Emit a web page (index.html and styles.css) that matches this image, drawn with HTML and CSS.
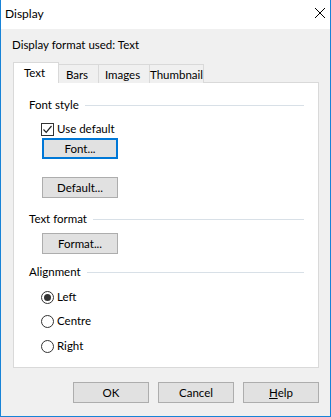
FILE: index.html
```html
<!DOCTYPE html>
<html lang="en">
<head>
    <meta charset="UTF-8">
    <title>Display</title>
    <link rel="stylesheet" href="styles.css">
</head>
<body>
    <div class="window">
        <div class="title-bar">
            <span class="title">Display</span>
            <svg class="close" width="12" height="12" viewBox="0 0 12 12">
                <path d="M1 1 L11 11 M11 1 L1 11" stroke="#000" stroke-width="1" fill="none"/>
            </svg>
        </div>

        <div class="client">
            <div class="used">Display format used: Text</div>

            <div class="tabs">
                <div class="tab active tab-text">Text</div>
                <div class="tab tab-bars">Bars</div>
                <div class="tab tab-images">Images</div>
                <div class="tab tab-thumb">Thumbnail</div>
            </div>

            <div class="panel">
                <div class="group group-font">
                    <span>Font style</span><span class="rule"></span>
                </div>
                <label class="check-row">
                    <span class="checkbox">
                        <svg width="11" height="11" viewBox="0 0 11 11">
                            <path d="M1.5 5.5 L4.2 8.3 L9.5 2" stroke="#222" stroke-width="1.2" fill="none"/>
                        </svg>
                    </span>
                    Use default
                </label>
                <button class="btn focused btn-font">Font...</button>
                <button class="btn btn-default">Default...</button>

                <div class="group group-text">
                    <span>Text format</span><span class="rule"></span>
                </div>
                <button class="btn btn-format">Format...</button>

                <div class="group group-align">
                    <span>Alignment</span><span class="rule"></span>
                </div>
                <label class="radio-row first"><span class="radio checked"></span>Left</label>
                <label class="radio-row second"><span class="radio"></span>Centre</label>
                <label class="radio-row third"><span class="radio"></span>Right</label>
            </div>

            <div class="actions">
                <button class="btn">OK</button>
                <button class="btn">Cancel</button>
                <button class="btn"><u>H</u>elp</button>
            </div>
        </div>
    </div>
</body>
</html>
```

FILE: styles.css
```css
* {
    margin: 0;
    padding: 0;
    box-sizing: border-box;
}

body {
    font-family: Lato, "Noto Sans", sans-serif;
    font-size: 11.5px;
    color: #000;
    background: #f0f0f0;
}

.window {
    width: 331px;
    height: 417px;
    display: flex;
    flex-direction: column;
    border: 1px solid #1883d7;
    border-top: none;
    background: #f0f0f0;
}

.title-bar {
    height: 29px;
    background: #fff;
    display: flex;
    align-items: center;
    justify-content: space-between;
    padding: 0 4px 3px 4px;
}

.title {
    font-size: 12px;
}

.client {
    flex: 1;
    display: flex;
    flex-direction: column;
}

.used {
    margin: 8px 0 0 11px;
    line-height: 16px;
}

.tabs {
    display: flex;
    align-items: flex-end;
    margin: 9px 0 -1px 12px;
    position: relative;
    z-index: 1;
}

.tab {
    height: 19px;
    border: 1px solid #d9d9d9;
    border-bottom: none;
    background: #f0f0f0;
    margin-left: -1px;
    text-align: center;
    line-height: 17px;
    padding: 1px 3px 0 0;
}

.tab.active {
    height: 21px;
    margin-left: 0;
    background: #fff;
    line-height: 18px;
    position: relative;
    z-index: 2;
}

.tab-text { width: 46px; }
.tab-bars { width: 41px; }
.tab-images { width: 52px; }
.tab-thumb { width: 55px; padding-right: 1px; }

.panel {
    height: 286px;
    margin: 0 11px 0 12px;
    background: #fff;
    border: 1px solid #d9d9d9;
    display: flex;
    flex-direction: column;
    align-items: flex-start;
    padding: 0 14px 0 15px;
}

.group {
    display: flex;
    align-items: center;
    align-self: stretch;
    line-height: 16px;
}

.group .rule {
    flex: 1;
    height: 1px;
    background: #d8e0e7;
    margin-left: 6px;
}

.group-font { margin-top: 14px; }
.group-text { margin-top: 13px; }
.group-align { margin-top: 10px; }

.check-row,
.radio-row {
    display: flex;
    align-items: center;
    line-height: 16px;
    margin-left: 12px;
}

.check-row { margin-top: 8px; }

.checkbox {
    width: 13px;
    height: 13px;
    border: 1px solid #333;
    background: #fff;
    margin-right: 3px;
    display: flex;
    align-items: center;
    justify-content: center;
}

.radio {
    width: 13px;
    height: 13px;
    border: 1px solid #333;
    border-radius: 50%;
    background: #fff;
    margin-right: 3px;
    display: flex;
    align-items: center;
    justify-content: center;
}

.radio.checked::after {
    content: "";
    width: 7px;
    height: 7px;
    border-radius: 50%;
    background: #333;
}

.radio-row.first { margin-top: 9px; }
.radio-row.second { margin-top: 8px; }
.radio-row.third { margin-top: 9px; }

.btn {
    width: 76px;
    height: 21px;
    font: inherit;
    color: #000;
    background: #e1e1e1;
    border: 1px solid #adadad;
    text-align: center;
    line-height: 19px;
}

.btn.focused {
    border: 2px solid #0078d7;
    line-height: 17px;
}

.panel .btn {
    margin-left: 13px;
}

.btn-font { margin-top: 1px; }
.btn-default { margin-top: 18px; }
.btn-format { margin-top: 6px; }

.actions {
    display: flex;
    justify-content: flex-end;
    gap: 9px;
    margin: 14px 11px 0 0;
}
```
